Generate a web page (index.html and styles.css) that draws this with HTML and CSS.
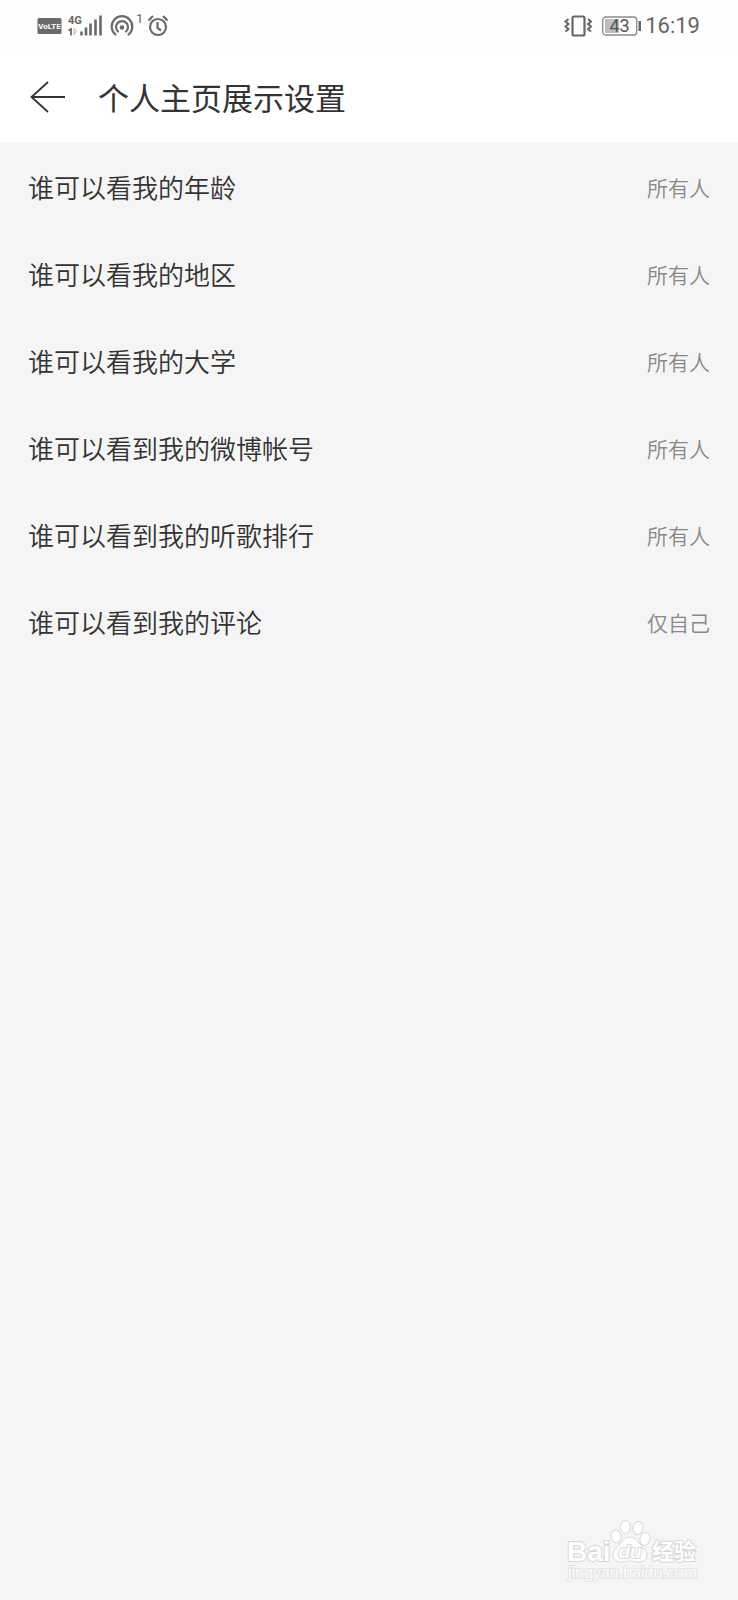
FILE: index.html
```html
<!DOCTYPE html>
<html lang="zh-CN">
<head>
    <meta charset="UTF-8">
    <meta name="viewport" content="width=device-width, initial-scale=1.0">
    <title>个人主页展示设置</title>
    <link rel="stylesheet" href="styles.css">
</head>
<body>
    <div class="status-bar">
        <!-- VoLTE, signal, hotspot, alarm -->
        <svg class="status-left" width="134" height="36" viewBox="36 8 134 36" aria-hidden="true">
            <rect x="37.500" y="18" width="24" height="16" rx="1.500" fill="#6a6a6a"/>
            <text class="volte" x="49.500" y="29" text-anchor="middle">VoLTE</text>
            <text class="net" x="68" y="24">4G</text>
            <path d="M68.500 30.500l2.500-1.500v6.500" fill="none" stroke="#6a6a6a" stroke-width="1.800"/>
            <path d="M74 28v7M74 29l3 2.500-3 2.500" fill="none" stroke="#bbb" stroke-width="1"/>
            <path d="M81.500 35.500v-4M86 35.500v-8M90.500 35.500v-12M95.500 35.500v-16M100.500 35.500v-20" stroke="#6a6a6a" stroke-width="2.600" fill="none"/>
            <g fill="none" stroke="#6a6a6a" stroke-width="2.200" stroke-linecap="round">
                <circle cx="122" cy="27.500" r="2.300" fill="#6a6a6a" stroke="none"/>
                <path d="M118 31.500a6 6 0 1 1 8 0M115.500 34.500a10.300 10.300 0 1 1 13 0"/>
            </g>
            <text class="sup" x="136" y="23">1</text>
            <g fill="none" stroke="#6a6a6a" stroke-width="2.200">
                <circle cx="158" cy="27" r="8"/>
                <path d="M157.500 22v6l3.500 2.500M148.500 20.500l4.500-4.500M163 16l4.500 4.500"/>
            </g>
        </svg>
        <div class="status-right">
            <svg width="28" height="22" viewBox="0 0 28 22" aria-hidden="true">
                <g fill="none" stroke="#666">
                    <rect x="8.500" y="1.500" width="12" height="19" rx="1.500" stroke-width="2.200"/>
                    <path d="M4.500 4l-3 2.500 3 2.500-3 2.500 3 2.500-3 2.500M24 4l3 2.500-3 2.500 3 2.500-3 2.500 3 2.500" stroke-width="2"/>
                </g>
            </svg>
            <svg class="battery" width="39" height="20" viewBox="0 0 39 20" aria-hidden="true">
                <rect x="3" y="3" width="14" height="14" fill="#bdbdbd"/>
                <rect x="0.700" y="1" width="34" height="18" rx="3" fill="none" stroke="#8a8a8a" stroke-width="1.300"/>
                <rect x="36.500" y="5" width="2.500" height="10" fill="#666"/>
                <text class="level" x="17.500" y="16" text-anchor="middle">43</text>
            </svg>
            <span class="time">16:19</span>
        </div>
    </div>

    <header class="title-bar">
        <button class="back" type="button" aria-label="返回">
            <svg width="36" height="32" viewBox="0 0 36 32">
                <path d="M18 1L1.500 16L18 31M1.500 16H35" fill="none" stroke="#333" stroke-width="1.800"/>
            </svg>
        </button>
        <h1>个人主页展示设置</h1>
    </header>

    <main>
        <ul class="settings">
            <li><button class="row" type="button"><span>谁可以看我的年龄</span><span class="value">所有人</span></button></li>
            <li><button class="row" type="button"><span>谁可以看我的地区</span><span class="value">所有人</span></button></li>
            <li><button class="row" type="button"><span>谁可以看我的大学</span><span class="value">所有人</span></button></li>
            <li><button class="row" type="button"><span>谁可以看到我的微博帐号</span><span class="value">所有人</span></button></li>
            <li><button class="row" type="button"><span>谁可以看到我的听歌排行</span><span class="value">所有人</span></button></li>
            <li><button class="row" type="button"><span>谁可以看到我的评论</span><span class="value">仅自己</span></button></li>
        </ul>
    </main>

    <!-- watermark -->
    <svg class="watermark" width="138" height="72" viewBox="0 0 138 72" aria-hidden="true">
        <g class="mark">
            <ellipse cx="50" cy="20.500" rx="5" ry="6.500" transform="rotate(-12 50 20.500)"/>
            <ellipse cx="59.500" cy="11" rx="5" ry="6.500"/>
            <ellipse cx="72" cy="12" rx="5" ry="6.500" transform="rotate(10 72 12)"/>
            <ellipse cx="79" cy="23" rx="5" ry="6.500" transform="rotate(16 79 23)"/>
            <path d="M64 21c5 0 8 4 10 7 3 4 7 6 7 11 0 5-4 7-8 7-4 0-5-1-9-1s-5 1-9 1c-5 0-8-3-8-7 0-5 4-7 7-11 3-3 5-7 10-7z"/>
            <text class="bai" x="1" y="45">Bai</text>
            <text class="du" x="64" y="42" text-anchor="middle">du</text>
            <text class="jingyan" x="86" y="43">经验</text>
        </g>
        <text class="site" x="2" y="62">jingyan.baidu.com</text>
    </svg>
</body>
</html>
```
FILE: styles.css
```css
* {
    box-sizing: border-box;
}

body {
    margin: 0;
    min-height: 100vh;
    position: relative;
    background-color: #f5f5f5;
    color: #333;
    font-family: Roboto, "Noto Sans CJK SC", sans-serif;
}

button {
    padding: 0;
    border: 0;
    background: none;
    color: inherit;
    font: inherit;
    cursor: pointer;
}

.status-bar {
    display: flex;
    justify-content: space-between;
    align-items: center;
    height: 52px;
    padding: 0 38px 0 36px;
    background-color: #fefefe;
}

.status-bar svg {
    display: block;
}

.status-right {
    display: flex;
    align-items: center;
}

.battery {
    margin: 0 4px 0 10px;
}

.time {
    font-size: 22px;
    line-height: 28px;
    color: #666;
}

.volte {
    font: bold 8px Roboto, sans-serif;
    fill: #fff;
}

.net {
    font: bold 11px Roboto, sans-serif;
    fill: #666;
}

.sup {
    font: 13px Roboto, sans-serif;
    fill: #666;
}

.level {
    font: 18px Roboto, sans-serif;
    fill: #555;
}

.title-bar {
    display: flex;
    align-items: center;
    gap: 32px;
    height: 90px;
    padding: 0 30px;
    background-color: #fff;
    box-shadow: 0 1px 3px #fafafa;
}

.back svg {
    display: block;
}

h1 {
    margin: 0;
    font-family: "Noto Sans CJK SC", sans-serif;
    font-size: 31px;
    font-weight: 400;
    line-height: 44px;
}

.settings {
    margin: 0;
    padding: 1px 0;
    list-style: none;
}

.row {
    display: flex;
    justify-content: space-between;
    align-items: center;
    width: 100%;
    height: 87px;
    padding: 0 28px;
    font-family: "Noto Sans CJK SC", sans-serif;
    font-size: 26px;
    font-weight: 350;
}

.value {
    font-size: 21px;
    color: #888;
}

.watermark {
    position: absolute;
    right: 34px;
    bottom: 12px;
}

.mark {
    fill: #fefefe;
    stroke: #d8d8d8;
    stroke-width: 1;
}

.mark text {
    stroke-width: 2;
    paint-order: stroke;
}

.bai {
    font: bold 28px "Liberation Sans", sans-serif;
}

.du {
    font: italic bold 19px "Liberation Sans", sans-serif;
}

.jingyan {
    font: bold 22px "Noto Sans CJK SC", sans-serif;
}

.site {
    font: 16px "Liberation Sans", sans-serif;
    fill: #fcfcfc;
    stroke: #e4e4e4;
    stroke-width: 2;
    paint-order: stroke;
}
```
